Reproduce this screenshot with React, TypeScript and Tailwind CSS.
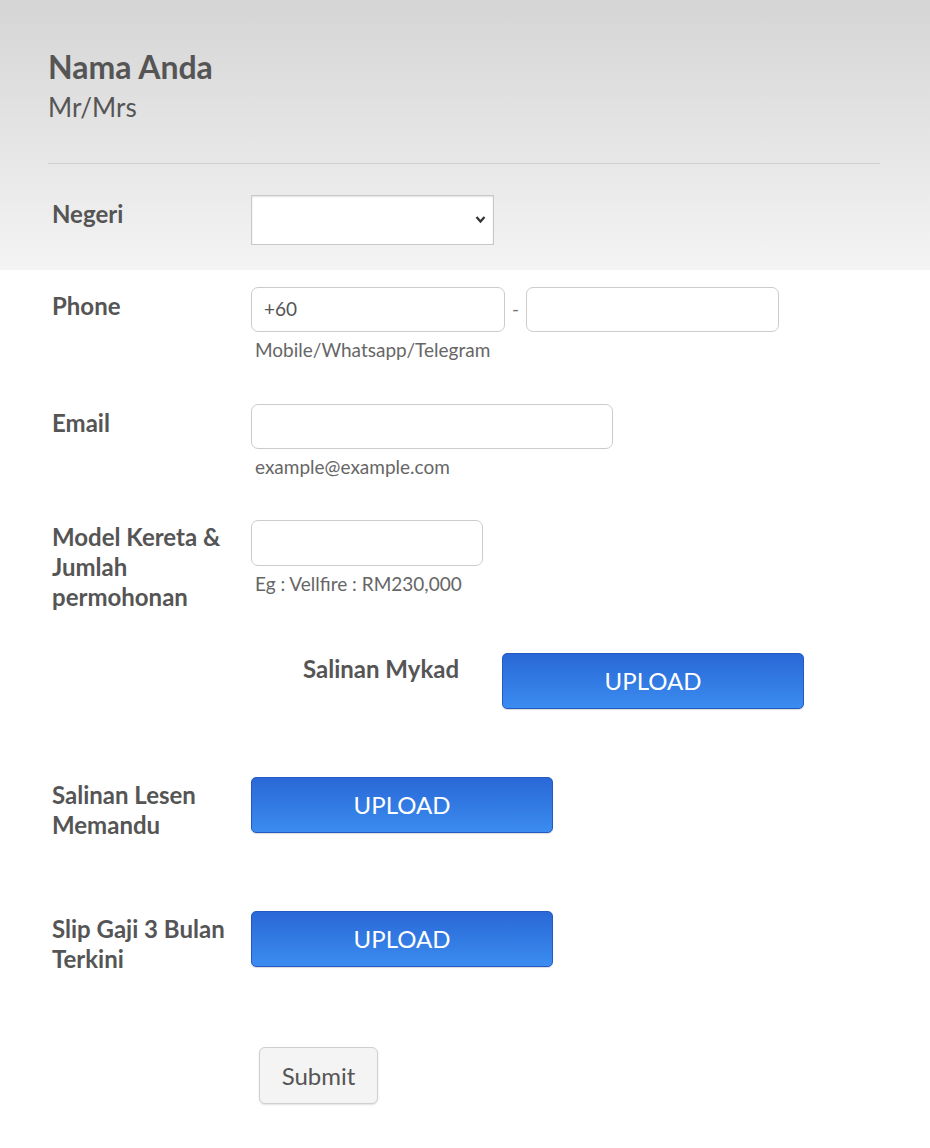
import React from "react";

const lato = { fontFamily: "Lato, 'Open Sans', sans-serif" };

function Label({ children, className = "" }: { children: React.ReactNode; className?: string }) {
  return (
    <div className={`w-[203px] shrink-0 pl-[4px] pr-3 text-[24px] font-bold leading-[30px] text-[#555555] ${className}`}>
      {children}
    </div>
  );
}

function Helper({ children }: { children: React.ReactNode }) {
  return <div className="mt-[7px] pl-[4px] text-[19px] leading-[22px] text-[#666666]">{children}</div>;
}

function UploadButton() {
  return (
    <button
      type="button"
      className="h-[56px] w-[302px] rounded-[5px] border border-[#2559c4] bg-gradient-to-b from-[#2a68d6] to-[#3b8cf0] text-[24px] text-white shadow-[0_1px_1px_rgba(0,0,0,0.15)]"
    >
      UPLOAD
    </button>
  );
}

export default function App() {
  return (
    <div style={lato} className="min-h-[1148px] w-[930px] bg-white text-[#555555]">
      <div className="bg-gradient-to-b from-[#d5d5d5] to-[#f4f4f4] px-[48px] pt-[47px] pb-[25px]">
        <h1 className="text-[32px] font-bold leading-[40px] text-[#555555]">Nama Anda</h1>
        <div className="mt-[4px] text-[26px] leading-[32px] text-[#555555]">Mr/Mrs</div>
        <div className="mt-[40px] mr-[2px] h-px bg-[#d0d0d0]" />
        <div className="mt-[31px] flex">
          <Label className="pt-[4px]">Negeri</Label>
          <div className="relative h-[50px] w-[243px] border border-[#c8c8c8] bg-white shadow-[inset_0_1px_2px_rgba(0,0,0,0.12)]">
            <svg className="absolute right-[7px] top-[19px]" width="11" height="9" viewBox="0 0 11 9">
              <path d="M1.5 2 L5.5 6.5 L9.5 2" fill="none" stroke="#333" strokeWidth="2.2" />
            </svg>
          </div>
        </div>
      </div>

      <div className="px-[48px]">
        <div className="mt-[17px] flex">
          <Label className="pt-[4px]">Phone</Label>
          <div>
            <div className="flex items-center">
              <div className="flex h-[45px] w-[254px] items-center rounded-[7px] border border-[#cccccc] bg-white px-[12px] text-[19px] text-[#555555]">
                +60
              </div>
              <span className="w-[21px] text-center text-[19px] text-[#777]">-</span>
              <div className="h-[45px] w-[253px] rounded-[7px] border border-[#cccccc] bg-white" />
            </div>
            <Helper>Mobile/Whatsapp/Telegram</Helper>
          </div>
        </div>

        <div className="mt-[43px] flex">
          <Label className="pt-[4px]">Email</Label>
          <div>
            <div className="h-[45px] w-[362px] rounded-[7px] border border-[#cccccc] bg-white" />
            <Helper>example@example.com</Helper>
          </div>
        </div>

        <div className="mt-[42px] flex">
          <Label className="pt-[2px]">
            Model Kereta &amp; Jumlah permohonan
          </Label>
          <div>
            <div className="h-[46px] w-[232px] rounded-[7px] border border-[#cccccc] bg-white" />
            <Helper>Eg : Vellfire : RM230,000</Helper>
          </div>
        </div>

        <div className="mt-[41px] flex">
          <div className="w-[454px] shrink-0 pl-[255px] pt-[1px] text-[24px] font-bold leading-[30px] text-[#555555]">
            Salinan Mykad
          </div>
          <UploadButton />
        </div>

        <div className="mt-[68px] flex">
          <Label className="pt-[3px]">Salinan Lesen Memandu</Label>
          <UploadButton />
        </div>

        <div className="mt-[71px] flex">
          <Label className="pt-[3px]">Slip Gaji 3 Bulan Terkini</Label>
          <UploadButton />
        </div>

        <div className="mt-[73px] pl-[211px]">
          <button
            type="button"
            className="h-[57px] w-[119px] rounded-[6px] border border-[#cfcfcf] bg-[#f4f4f4] text-[24px] text-[#555555] shadow-[0_1px_2px_rgba(0,0,0,0.12)]"
          >
            Submit
          </button>
        </div>
      </div>
    </div>
  );
}
